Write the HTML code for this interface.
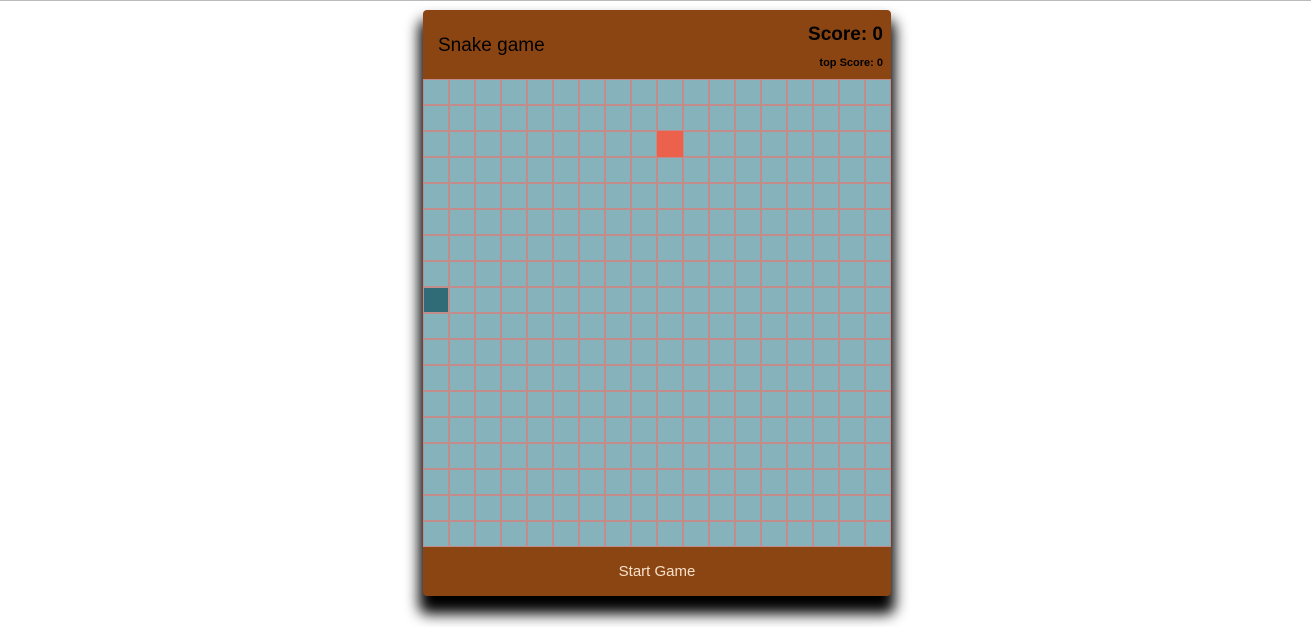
<!DOCTYPE html>
<html><head><meta charset="utf-8"><style>
body{margin:0;width:1311px;height:627px;background:#fff;position:relative;overflow:hidden;font-family:"Liberation Sans",sans-serif}
.top{position:absolute;left:0;top:0;width:1311px;height:1px;background:#bbb}
.card{position:absolute;left:423px;top:10px;width:468px;height:586px;border-radius:4px;background:#8b4513;box-shadow:0 14px 14px 4px #000;overflow:hidden}
.hd{position:absolute;left:0;top:0;width:468px;height:69px;color:#000}
.t{position:absolute;left:15px;top:25px;font-size:19px}
.s{position:absolute;right:8px;top:14px;font-size:19px;font-weight:bold}
.ts{position:absolute;right:8px;top:47px;font-size:11px;font-weight:bold}
.g{position:absolute;left:0;top:69px;width:466px;height:466px;padding:1px;background:#c28c8a;display:grid;grid-template-columns:repeat(18,24px);grid-template-rows:repeat(18,24px);gap:2px}
.g div{background:#86b3bb}
.f{position:absolute;left:234px;top:121px;width:26px;height:26px;background:#ec614b}
.sn{position:absolute;left:1px;top:278px;width:24px;height:24px;background:#2f6c78}
.ft{position:absolute;left:0;top:537px;width:468px;height:49px;text-align:center;line-height:49px;color:#f6e0c8;font-size:15px}
</style></head><body>
<div class="top"></div>
<div class="card">
<div class="hd"><div class="t">Snake game</div><div class="s">Score: 0</div><div class="ts">top Score: 0</div></div>
<div class="g">
<script>document.write('<div></div>'.repeat(324))</script>
</div>
<div class="f"></div><div class="sn"></div>
<div class="ft">Start Game</div>
</div>
</body></html>
